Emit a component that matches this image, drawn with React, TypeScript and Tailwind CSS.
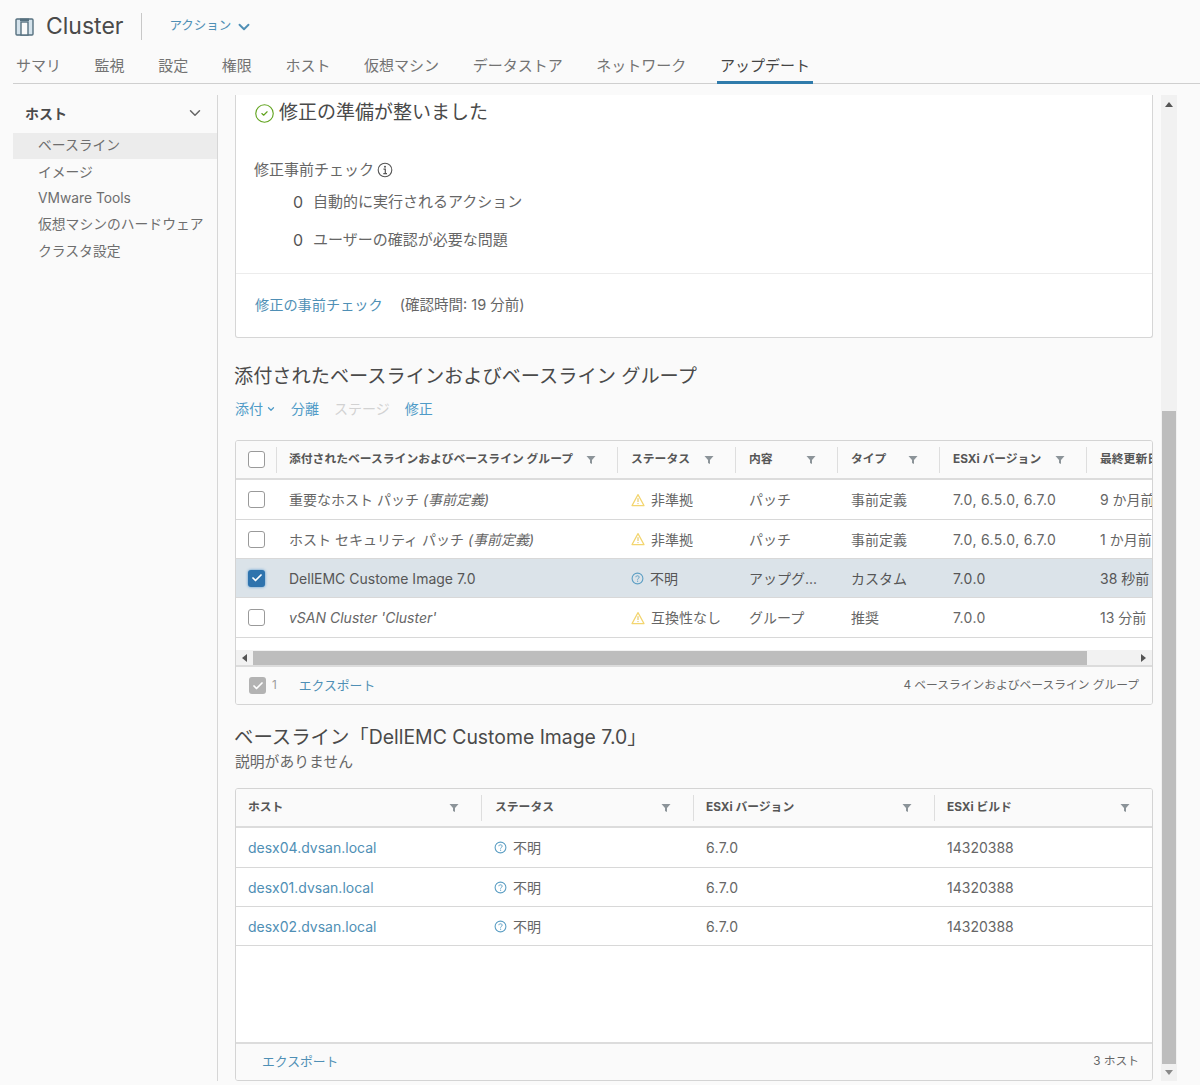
import { ChevronDown, CircleCheck, Check } from 'lucide-react'

const FONT = 'font-["Inter","Noto_Sans_CJK_JP",sans-serif]'

const tabs = ['サマリ', '監視', '設定', '権限', 'ホスト', '仮想マシン', 'データストア', 'ネットワーク']
const sideItems = ['イメージ', 'VMware Tools', '仮想マシンのハードウェア', 'クラスタ設定']

const baselineCols = 'grid-cols-[40px_341px_118px_102px_102px_147px_80px]'
const hostCols = 'grid-cols-[245px_212px_241px_1fr]'

const baselineRows = [
  { name: '重要なホスト パッチ ', suffix: '(事前定義)', status: '非準拠', kind: 'warn', content: 'パッチ', type: '事前定義', ver: '7.0, 6.5.0, 6.7.0', updated: '9 か月前', h: 'h-[40px]' },
  { name: 'ホスト セキュリティ パッチ ', suffix: '(事前定義)', status: '非準拠', kind: 'warn', content: 'パッチ', type: '事前定義', ver: '7.0, 6.5.0, 6.7.0', updated: '1 か月前', h: 'h-[39px]' },
  { name: 'DellEMC Custome Image 7.0', status: '不明', kind: 'unknown', content: 'アップグ...', type: 'カスタム', ver: '7.0.0', updated: '38 秒前', h: 'h-[39px]', selected: true },
  { name: "vSAN Cluster 'Cluster'", status: '互換性なし', kind: 'warn', content: 'グループ', type: '推奨', ver: '7.0.0', updated: '13 分前', h: 'h-[40px]', italic: true },
]

const hosts = ['desx04.dvsan.local', 'desx01.dvsan.local', 'desx02.dvsan.local']

function ClusterIcon() {
  return (
    <svg width="20" height="20" viewBox="0 0 20 20" fill="none" className="shrink-0">
      <rect x="1" y="2" width="17" height="16" rx="1" fill="#d5e3ec" stroke="#56707f" strokeWidth="1.4" />
      <rect x="5" y="1.5" width="9" height="2.5" fill="#56707f" />
      <rect x="6" y="5" width="7" height="13" fill="#fafafa" stroke="#56707f" strokeWidth="1.4" />
    </svg>
  )
}

function InfoIcon() {
  return (
    <svg width="16" height="16" viewBox="0 0 16 16" fill="none" className="shrink-0">
      <circle cx="8" cy="8" r="6.8" stroke="#565656" strokeWidth="1.1" />
      <circle cx="8" cy="4.8" r="1" fill="#565656" />
      <path d="M6.5 7.2H8.3V11.4M6.3 11.6H10" stroke="#565656" strokeWidth="1.2" />
    </svg>
  )
}

function WarnIcon() {
  return (
    <svg width="14" height="14" viewBox="0 0 14 14" fill="none" className="shrink-0">
      <path d="M7 1.6L13 12.6H1L7 1.6Z" stroke="#f3d56f" strokeWidth="1.2" strokeLinejoin="round" />
      <path d="M7 5.2V9" stroke="#e0bf52" strokeWidth="1" />
      <circle cx="7" cy="10.6" r="0.6" fill="#e0bf52" />
    </svg>
  )
}

function HelpIcon() {
  return (
    <svg width="13" height="13" viewBox="0 0 13 13" fill="none" className="shrink-0">
      <circle cx="6.5" cy="6.5" r="5.4" stroke="#5d9fc4" strokeWidth="1.1" />
      <path d="M4.8 5.2C4.9 4.2 5.6 3.8 6.5 3.8C7.5 3.8 8.2 4.4 8.2 5.2C8.2 6.3 6.6 6.4 6.6 7.6" stroke="#5d9fc4" strokeWidth="1" />
      <circle cx="6.6" cy="9.2" r="0.6" fill="#5d9fc4" />
    </svg>
  )
}

function FilterIcon() {
  return (
    <svg width="10" height="10" viewBox="0 0 10 10" className="shrink-0">
      <path d="M0.5 1H9.5L6 5V9L4 8V5L0.5 1Z" fill="#8c9499" />
    </svg>
  )
}

function Box({ checked }: { checked?: boolean }) {
  return (
    <span
      className={
        checked
          ? 'flex h-[17px] w-[17px] items-center justify-center rounded-[3px] bg-[#2f73ad] shadow-[0_0_3px_#4f93cd]'
          : 'block h-[17px] w-[17px] rounded-[3px] border border-[#9a9a9a] bg-white'
      }
    >
      {checked && <Check size={12} strokeWidth={3.5} className="text-white" />}
    </span>
  )
}

function HeadCell({ label, filter = true, bar = true, pad = 'pl-[13px] pr-[21px]' }: { label: string; filter?: boolean; bar?: boolean; pad?: string }) {
  return (
    <div className={`flex h-[26px] items-center justify-between overflow-hidden whitespace-nowrap ${pad} text-[11.8px] font-bold text-[#565656] ${bar ? 'border-l border-[#dedede]' : ''}`}>
      <span>{label}</span>
      {filter && <FilterIcon />}
    </div>
  )
}

function StatusCell({ kind, text, pad }: { kind: string; text: string; pad: string }) {
  return (
    <div className={`flex items-center gap-[6px] whitespace-nowrap ${pad}`}>
      {kind === 'warn' ? <WarnIcon /> : <HelpIcon />}
      <span>{text}</span>
    </div>
  )
}

export default function App() {
  return (
    <div className={`${FONT} h-[1085px] w-[1200px] overflow-hidden bg-[#fafafa] text-[#666666]`}>
      {/* Header */}
      <div className="ml-[15px] flex h-[53px] items-center">
        <ClusterIcon />
        <span className="ml-[11px] text-[23px] leading-none text-[#4a4a4a]">Cluster</span>
        <div className="ml-[18px] h-[27px] w-px bg-[#c8c8c8]" />
        <span className="ml-[27px] text-[12.5px] text-[#4f8fb5]">アクション</span>
        <ChevronDown size={18} strokeWidth={2.5} className="ml-[4px] text-[#4f8fb5]" />
      </div>
      <div className="ml-[13px] flex h-[31px] gap-[33.6px] border-b border-[#cfcfcf] pl-[3px] text-[15px] leading-[26px] text-[#737373]">
        {tabs.map(t => (
          <span key={t} className="whitespace-nowrap">{t}</span>
        ))}
        <span className="-mx-[3px] h-[31px] whitespace-nowrap border-b-[3px] border-[#2f7bab] px-[3px] text-[#444444]">アップデート</span>
      </div>

      <div className="flex">
        {/* Sidebar */}
        <div className="mt-[11px] h-[986px] w-[218px] border-r border-[#d6d6d6] pl-[13px]">
          <div className="mb-[2px] flex h-[36px] items-center justify-between pl-[12px] pr-[13px] text-[14px] font-bold text-[#4a4a4a]">
            <span>ホスト</span>
            <ChevronDown size={18} className="text-[#666666]" />
          </div>
          <div className="flex h-[26px] items-center bg-[#ececec] pb-[1px] pl-[25px] text-[13.8px] text-[#6e6e6e]">ベースライン</div>
          {sideItems.map(s => (
            <div key={s} className="flex h-[26.3px] items-center whitespace-nowrap pl-[25px] text-[13.8px] text-[#6e6e6e]">{s}</div>
          ))}
        </div>

        {/* Main */}
        <div className="ml-[17px] mt-[11px] w-[918px] text-[14px]">
          {/* Precheck card */}
          <div className="h-[243px] rounded-b-[3px] border border-t-0 border-[#d6d6d6] bg-white">
            <div className="flex items-center gap-[4px] pl-[18px] pt-[4px] text-[19px] leading-[28px] text-[#4a4a4a]">
              <CircleCheck size={21} strokeWidth={1.3} className="text-[#62a420]" />
              <span>修正の準備が整いました</span>
            </div>
            <div className="mt-[31px] flex items-center gap-[3px] pl-[18px] text-[15px] leading-[24px]">
              <span>修正事前チェック</span>
              <InfoIcon />
            </div>
            <div className="mt-[8px] flex items-center gap-[9px] pl-[56px] text-[15px] leading-[24px]">
              <span className="w-[12px] text-center text-[16px] text-[#555555]">0</span>
              <span>自動的に実行されるアクション</span>
            </div>
            <div className="mt-[14px] flex items-center gap-[9px] pl-[56px] text-[15px] leading-[24px]">
              <span className="w-[12px] text-center text-[16px] text-[#555555]">0</span>
              <span>ユーザーの確認が必要な問題</span>
            </div>
            <div className="mt-[21px] flex h-[63px] items-center gap-[17px] border-t border-[#ececec] pl-[19px]">
              <span className="text-[14.2px] text-[#4f8fb5]">修正の事前チェック</span>
              <span className="text-[14.5px]">(確認時間: 19 分前)</span>
            </div>
          </div>

          {/* Attached baselines */}
          <h2 className="-ml-px mt-[24px] whitespace-nowrap text-[19.2px] font-normal leading-[28px] text-[#4a4a4a]">添付されたベースラインおよびベースライン グループ</h2>
          <div className="mt-[9px] flex items-center text-[14px] leading-[20px] text-[#4f9bc7]">
            <span>添付</span>
            <ChevronDown size={10} strokeWidth={3} className="ml-[3px]" />
            <span className="ml-[15px]">分離</span>
            <span className="ml-[15px] text-[#d2d2d2]">ステージ</span>
            <span className="ml-[15px]">修正</span>
          </div>

          <div className="mt-[21px] h-[265px] overflow-hidden rounded-[3px] border border-[#d4d4d4] bg-white">
            <div className={`grid ${baselineCols} h-[39px] items-center border-b-2 border-[#dcdcdc] bg-[#fafafa]`}>
              <div className="flex justify-center pl-[1px]"><Box /></div>
              <HeadCell label="添付されたベースラインおよびベースライン グループ" pad="pl-[12px] pr-[21px]" />
              <HeadCell label="ステータス" />
              <HeadCell label="内容" />
              <HeadCell label="タイプ" />
              <HeadCell label="ESXi バージョン" />
              <HeadCell label="最終更新日" filter={false} pad="pl-[13px]" />
            </div>
            {baselineRows.map(r => (
              <div
                key={r.name}
                className={`grid ${baselineCols} ${r.h} items-center border-b border-[#d8d8d8] ${r.selected ? 'bg-[#dbe3e9] text-[#565656]' : ''}`}
              >
                <div className="flex justify-center pl-[1px]"><Box checked={r.selected} /></div>
                <div className={`whitespace-pre pl-[13px] ${r.italic ? 'italic' : ''}`}>
                  {r.name}
                  {r.suffix && <span className="italic">{r.suffix}</span>}
                </div>
                <StatusCell kind={r.kind} text={r.status} pad="pl-[14px]" />
                <div className="whitespace-nowrap pl-[14px]">{r.content}</div>
                <div className="whitespace-nowrap pl-[14px]">{r.type}</div>
                <div className="whitespace-nowrap pl-[14px] tracking-[0.35px]">{r.ver}</div>
                <div className="overflow-hidden whitespace-nowrap pl-[14px]">{r.updated}</div>
              </div>
            ))}
            {/* horizontal scrollbar */}
            <div className="mt-[12px] flex h-[17px] items-center border-b-2 border-[#dcdcdc] bg-[#f2f2f2]">
              <span className="ml-[6px] h-0 w-0 border-y-[4px] border-r-[5px] border-y-transparent border-r-[#555555]" />
              <div className="ml-[6px] h-[14px] w-[834px] bg-[#bdbdbd]" />
              <span className="ml-[54px] h-0 w-0 border-y-[4px] border-l-[5px] border-y-transparent border-l-[#555555]" />
            </div>
            <div className="flex h-[37px] items-center bg-[#fafafa] pl-[13px] pr-[13px] text-[11.75px]">
              <span className="flex h-[17px] w-[17px] items-center justify-center rounded-[3px] bg-[#b3b3b3]">
                <Check size={12} strokeWidth={3.5} className="text-white" />
              </span>
              <span className="ml-[6px] text-[#9a9a9a]">1</span>
              <span className="ml-[22px] text-[12.8px] text-[#4f8fb5]">エクスポート</span>
              <span className="ml-auto">4 ベースラインおよびベースライン グループ</span>
            </div>
          </div>

          {/* Selected baseline */}
          <h2 className="-ml-px mt-[18px] whitespace-nowrap text-[19.4px] font-normal leading-[28px] text-[#4a4a4a]">ベースライン「DellEMC Custome Image 7.0」</h2>
          <p className="mt-[1px] text-[14.8px] leading-[20px]">説明がありません</p>

          <div className="mt-[16px] h-[293px] overflow-hidden rounded-[3px] border border-[#d4d4d4] bg-white">
            <div className={`grid ${hostCols} h-[39px] items-center border-b-2 border-[#dcdcdc] bg-[#fafafa]`}>
              <HeadCell label="ホスト" bar={false} pad="pl-[12px] pr-[22px]" />
              <HeadCell label="ステータス" pad="pl-[13px] pr-[22px]" />
              <HeadCell label="ESXi バージョン" pad="pl-[12px] pr-[22px]" />
              <HeadCell label="ESXi ビルド" pad="pl-[12px] pr-[22px]" />
            </div>
            {hosts.map((h, i) => (
              <div key={h} className={`grid ${hostCols} ${i === 0 ? 'h-[40px]' : 'h-[39px]'} items-center border-b border-[#d8d8d8]`}>
                <div className="pl-[12px] text-[#4f8fb5]">{h}</div>
                <StatusCell kind="unknown" text="不明" pad="pl-[13px]" />
                <div className="pl-[13px] tracking-[0.35px]">6.7.0</div>
                <div className="pl-[13px]">14320388</div>
              </div>
            ))}
            <div className="h-[96px]" />
            <div className="flex h-[38px] items-center border-t-2 border-[#dcdcdc] bg-[#fafafa] pl-[26px] pr-[13px] text-[11.75px]">
              <span className="text-[12.8px] text-[#4f8fb5]">エクスポート</span>
              <span className="ml-auto">3 ホスト</span>
            </div>
          </div>
        </div>

        {/* Vertical scrollbar */}
        <div className="ml-[8px] mt-[11px] flex h-[986px] w-[16px] flex-col items-center bg-[#f1f1f1]">
          <span className="mt-[7px] h-0 w-0 border-x-[4px] border-b-[5px] border-x-transparent border-b-[#555555]" />
          <div className="mt-[304px] h-[653px] w-[14px] bg-[#bdbdbd]" />
          <span className="mt-[6px] h-0 w-0 border-x-[4px] border-t-[5px] border-x-transparent border-t-[#8a8a8a]" />
        </div>
      </div>
    </div>
  )
}
